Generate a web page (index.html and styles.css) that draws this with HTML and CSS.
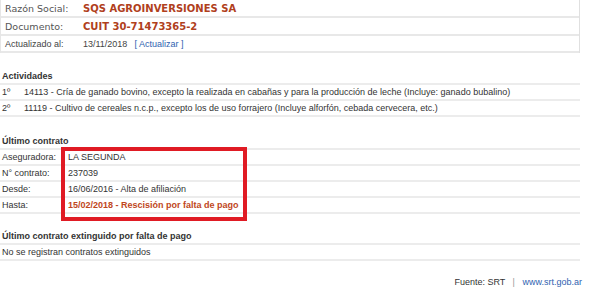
FILE: index.html
```html
<!DOCTYPE html>
<html lang="es">
<head>
<meta charset="utf-8">
<link rel="stylesheet" href="styles.css">
</head>
<body>
<div class="page">
  <div class="ident">
    <div class="irow big"><span class="ilabel">Razón Social:</span><span class="ival">SQS AGROINVERSIONES SA</span></div>
    <div class="irow big"><span class="ilabel">Documento:</span><span class="ival">CUIT 30-71473365-2</span></div>
    <div class="irow small"><span class="ilabel">Actualizado al:</span><span class="idate">13/11/2018</span><span class="bracket">[ <a class="link">Actualizar</a> ]</span></div>
  </div>

  <div class="section first">
    <div class="heading">Actividades</div>
    <div class="row"><span class="num">1º</span><span>14113 - Cría de ganado bovino, excepto la realizada en cabañas y para la producción de leche (Incluye: ganado bubalino)</span></div>
    <div class="row"><span class="num">2º</span><span>11119 - Cultivo de cereales n.c.p., excepto los de uso forrajero (Incluye alforfón, cebada cervecera, etc.)</span></div>
  </div>

  <div class="section contract">
    <div class="heading">Último contrato</div>
    <div class="row"><span class="clabel">Aseguradora:</span><span>LA SEGUNDA</span></div>
    <div class="row"><span class="clabel">N° contrato:</span><span>237039</span></div>
    <div class="row"><span class="clabel">Desde:</span><span>16/06/2016 - Alta de afiliación</span></div>
    <div class="row"><span class="clabel">Hasta:</span><span class="alert">15/02/2018 - Rescisión por falta de pago</span></div>
    <div class="highlight"></div>
  </div>

  <div class="section last">
    <div class="heading">Último contrato extinguido por falta de pago</div>
    <div class="row">No se registran contratos extinguidos</div>
  </div>

  <div class="footer">Fuente: SRT <span class="sep">|</span> <a class="link">www.srt.gob.ar</a></div>
</div>
</body>
</html>
```
FILE: styles.css
```css
html, body {
  margin: 0;
  padding: 0;
  background: #ffffff;
}
.page {
  width: 580px;
  font-family: "Liberation Sans", Arial, sans-serif;
  font-size: 9px;
  color: #333333;
}
.ident {
  border-left: 1px solid #e6e6e6;
  border-right: 1px solid #e0e0e0;
}
.irow {
  display: flex;
  align-items: center;
  border-bottom: 2px solid #e8e8e8;
  padding-left: 4px;
  white-space: nowrap;
}
.irow.big {
  height: 16px;
}
.irow.small {
  height: 15px;
}
.ilabel {
  width: 78px;
  flex: none;
  font-family: "DejaVu Sans", Verdana, sans-serif;
  font-size: 9.5px;
  color: #555555;
}
.irow.small .ilabel {
  font-family: "Liberation Sans", Arial, sans-serif;
  font-size: 9px;
  color: #444444;
}
.ival {
  font-family: "DejaVu Sans", Verdana, sans-serif;
  font-size: 10px;
  font-weight: bold;
  color: #b0401c;
}
.idate {
  color: #444444;
}
.bracket {
  margin-left: 7px;
  color: #2f62b0;
}
.link {
  color: #2f62b0;
  text-decoration: none;
}
.section {
  position: relative;
  margin-top: 17px;
}
.section.first {
  margin-top: 16px;
}
.section.last {
  margin-top: 15px;
}
.heading {
  font-weight: bold;
  line-height: 14px;
  padding-left: 2px;
  border-bottom: 2px solid #ececec;
  color: #333333;
}
.row {
  display: flex;
  line-height: 14px;
  padding-left: 2px;
  border-bottom: 2px solid #ececec;
  white-space: nowrap;
}
.num {
  width: 22px;
  flex: none;
}
.clabel {
  width: 66px;
  flex: none;
}
.alert {
  color: #c0461c;
  font-weight: bold;
}
.highlight {
  position: absolute;
  left: 61px;
  top: 13px;
  width: 178px;
  height: 66px;
  border: 4px solid #e01b24;
  pointer-events: none;
}
.footer {
  width: 582px;
  margin-top: 14px;
  text-align: right;
  line-height: 14px;
}
.sep {
  color: #999999;
  margin: 0 5px;
}
```
